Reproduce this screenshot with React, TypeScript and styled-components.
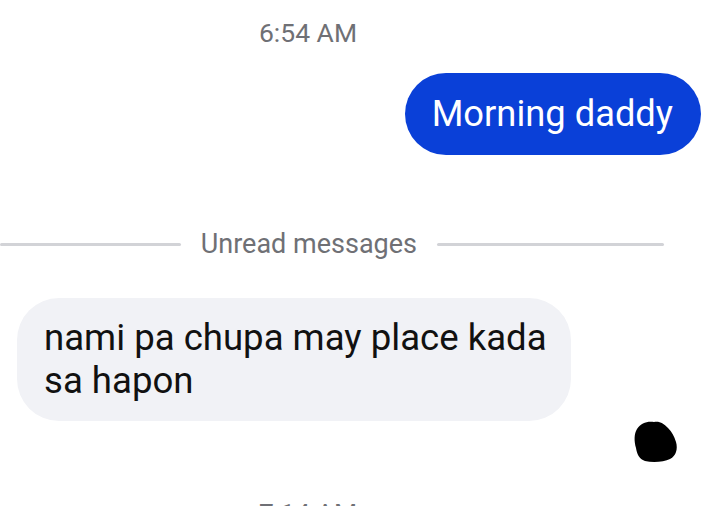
import React from "react";
import styled, { createGlobalStyle } from "styled-components";

const Global = createGlobalStyle`
  html, body { margin: 0; padding: 0; background: #ffffff; }
  body { font-family: Roboto, "Noto Sans", "Liberation Sans", sans-serif; overflow: hidden; }
`;

const Thread = styled.main`
  width: 720px;
  height: 506px;
  overflow: hidden;
  display: flex;
  flex-direction: column;
  padding-top: 17px;
  box-sizing: border-box;
`;

const TimeStamp = styled.div<{ $top?: number }>`
  width: 616px;
  margin-top: ${(p) => p.$top ?? 0}px;
  text-align: center;
  font-size: 26.5px;
  line-height: 32px;
  color: #6f7075;
  flex-shrink: 0;
`;

const Row = styled.div<{ $top: number; $side: "start" | "end"; $inset: number }>`
  display: flex;
  justify-content: ${(p) => (p.$side === "end" ? "flex-end" : "flex-start")};
  margin-top: ${(p) => p.$top}px;
  ${(p) => (p.$side === "end" ? `padding-right: ${p.$inset}px;` : `padding-left: ${p.$inset}px;`)}
  flex-shrink: 0;
`;

const OutBubble = styled.div`
  background: #0a40d8;
  color: #ffffff;
  font-size: 36.3px;
  line-height: 42px;
  padding: 20px 28px 20px 27px;
  border-radius: 41px;
`;

const InBubble = styled.div`
  width: 554px;
  box-sizing: border-box;
  background: #f1f2f6;
  color: #111111;
  font-size: 36.6px;
  line-height: 43px;
  padding: 18px 12px 19px 27px;
  border-radius: 42px;
`;

const Divider = styled.div<{ $top: number }>`
  width: 664px;
  display: flex;
  align-items: center;
  gap: 20px;
  margin-top: ${(p) => p.$top}px;
  font-size: 27px;
  line-height: 32px;
  color: #6f7075;
  flex-shrink: 0;
`;

const Rule = styled.span<{ $width?: number }>`
  height: 3px;
  border-radius: 2px;
  background: #d2d3d7;
  ${(p) => (p.$width ? `width: ${p.$width}px; flex-shrink: 0;` : "flex: 1;")}
`;

const Scribble = () => (
  <svg width="45" height="43" viewBox="0 0 45 43" aria-hidden>
    <path
      d="M4 9 C8 3 14 1 21 2 C27 1 31 4 35 8 C39 12 41 16 43 22 C45 29 43 36 37 39 C31 42 20 43 12 41 C6 39 4 34 3 28 C1 21 1 14 4 9 Z"
      fill="#000"
    />
  </svg>
);

export default function App() {
  return (
    <>
      <Global />
      <Thread>
        <TimeStamp>6:54 AM</TimeStamp>
        <Row $top={24} $side="end" $inset={19}>
          <OutBubble>Morning daddy</OutBubble>
        </Row>
        <Divider $top={73}>
          <Rule />
          <span>Unread messages</span>
          <Rule $width={227} />
        </Divider>
        <Row $top={38} $side="start" $inset={17}>
          <InBubble>nami pa chupa may place kada sa hapon</InBubble>
        </Row>
        <Row $top={-1} $side="end" $inset={42}>
          <Scribble />
        </Row>
        <TimeStamp $top={34}>7:14 AM</TimeStamp>
      </Thread>
    </>
  );
}
